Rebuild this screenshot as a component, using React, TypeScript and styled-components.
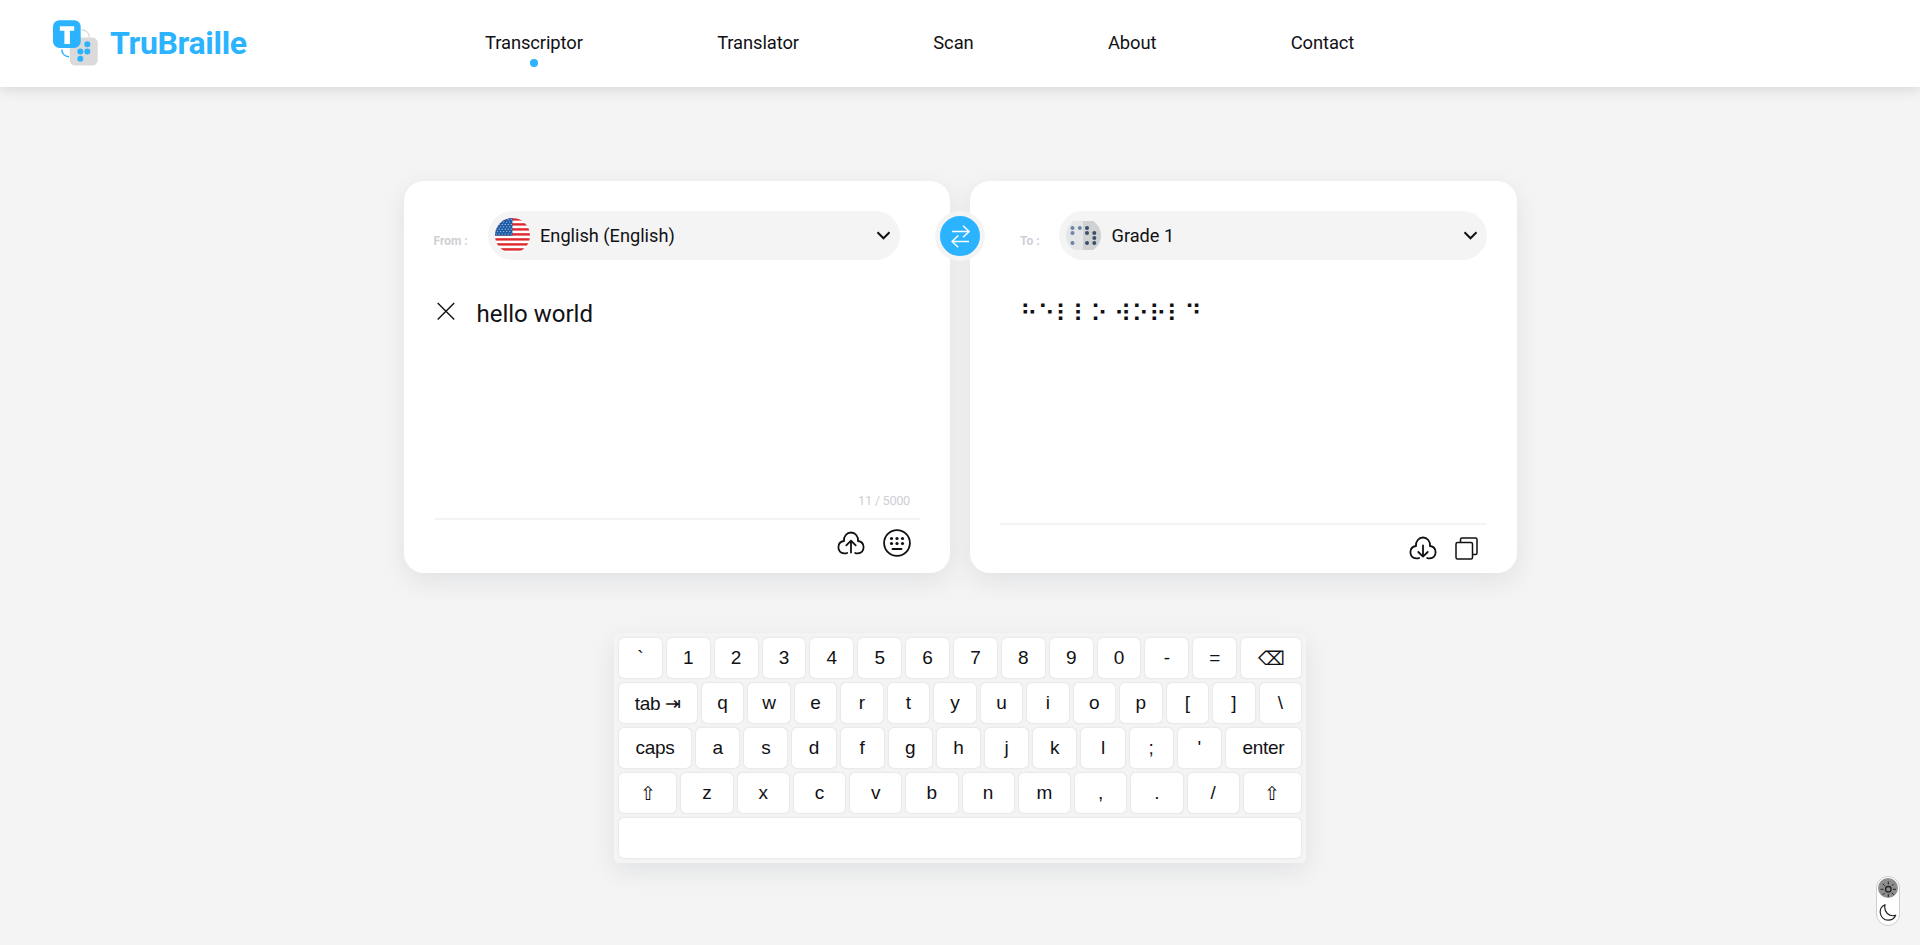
import React from 'react';
import styled, { createGlobalStyle } from 'styled-components';

const GlobalStyle = createGlobalStyle`
  *, *::before, *::after { box-sizing: border-box; }
  body { margin: 0; background: #f4f4f4; color: #111115; font-family: Roboto, sans-serif; }
  button { font: inherit; color: inherit; border: 0; background: none; padding: 0; }
  svg { display: block; flex: none; }
`;

const Page = styled.div`
  height: 945px;
  overflow: hidden;
  position: relative;
`;

const Header = styled.header`
  display: flex;
  align-items: center;
  height: 87px;
  padding: 0 0 2px 52px;
  background: #fff;
  box-shadow: 0 4px 12px rgba(0, 0, 0, 0.1);
`;

const Brand = styled.a`
  display: flex;
  align-items: center;
  gap: 12px;
  width: 433px;
  font-size: 32px;
  line-height: 36px;
  font-weight: 700;
  letter-spacing: -0.3px;
  color: #2bb3ff;
`;

const Nav = styled.nav`
  display: flex;
  gap: 134.3px;
`;

const NavLink = styled.a`
  position: relative;
  font-size: 18.4px;
  line-height: 24px;
  letter-spacing: -0.1px;
`;

const ActiveDot = styled.span`
  position: absolute;
  left: 50%;
  top: 28px;
  width: 8px;
  height: 8px;
  margin-left: -4px;
  border-radius: 50%;
  background: #2bb3ff;
`;

const Panels = styled.main`
  position: relative;
  display: flex;
  gap: 20px;
  width: 1113px;
  margin: 94px 0 0 404px;
`;

const Panel = styled.section<{ $pad: string }>`
  display: flex;
  flex-direction: column;
  flex: 1;
  height: 392px;
  padding: ${(p) => p.$pad};
  border-radius: 20px;
  background: #fff;
  box-shadow: rgba(149, 157, 165, 0.2) 0 8px 24px;
`;

const PickerRow = styled.div<{ $indent: number }>`
  display: flex;
  align-items: center;
  height: 49px;
  padding-left: ${(p) => p.$indent}px;
`;

const PickerLabel = styled.label<{ $width: number }>`
  width: ${(p) => p.$width}px;
  padding-top: 10px;
  font-size: 12px;
  line-height: 14px;
  font-weight: 700;
  color: #cfcfd4;
`;

const Picker = styled.button<{ $width: number }>`
  display: flex;
  align-items: center;
  gap: 10.5px;
  width: ${(p) => p.$width}px;
  height: 49px;
  padding: 0 9px 0 7px;
  border-radius: 25px;
  background: #f4f4f4;
  font-size: 18.2px;
`;

const PickerText = styled.span`
  flex: 1;
  text-align: left;
`;

const SwapButton = styled.button`
  position: absolute;
  left: 531px;
  top: 30px;
  width: 50px;
  height: 50px;
  border: 5px solid #f4f4f4;
  border-radius: 50%;
  background: #2bb3ff;
`;

const TextArea = styled.div<{ $indent: number }>`
  display: flex;
  flex: 1;
  gap: 22px;
  padding: 40px 0 0 ${(p) => p.$indent}px;
  font-size: 24px;
  line-height: 28px;
`;

const ClearButton = styled.button`
  align-self: flex-start;
  padding-top: 2px;
`;

const Braille = styled.span`
  font-family: Roboto, 'DejaVu Sans', sans-serif;
`;

const Counter = styled.div`
  padding: 0 10px 10px 0;
  text-align: right;
  font-size: 12.8px;
  line-height: 15px;
  letter-spacing: -0.32px;
  color: #cfcfd4;
`;

const Tools = styled.div<{ $height: number; $bottom: number }>`
  display: flex;
  justify-content: flex-end;
  align-items: center;
  gap: 18px;
  height: ${(p) => p.$height}px;
  margin-left: 1px;
  padding: 0 9px ${(p) => p.$bottom}px 0;
  border-top: 2px solid #f4f4f4;
`;

const Keyboard = styled.div`
  display: flex;
  flex-direction: column;
  gap: 5px;
  width: 692px;
  margin: 60px 0 0 614px;
  padding: 5px;
  border-radius: 5px;
  background: #f4f4f4;
  box-shadow: rgba(149, 157, 165, 0.2) 0 8px 24px;
`;

const KeyRow = styled.div`
  display: flex;
  gap: 5px;
`;

const Key = styled.button<{ $wide: boolean; $word: boolean }>`
  display: flex;
  flex: 1 0 ${(p) => (p.$wide ? 'auto' : '20px')};
  align-items: center;
  justify-content: center;
  height: 40px;
  padding: 5px;
  border-radius: 5px;
  background: #fff;
  box-shadow: 0 0 3px -1px rgba(0, 0, 0, 0.3);
  font-family: 'Liberation Sans', Arial, sans-serif;
  font-size: 19px;
  letter-spacing: ${(p) => (p.$word ? '-0.28px' : 'normal')};
  white-space: pre;
`;

const ThemeSwitch = styled.div`
  position: absolute;
  right: 20px;
  bottom: 19px;
  display: flex;
  flex-direction: column;
  justify-content: space-between;
  align-items: center;
  width: 24px;
  height: 50px;
  padding: 1px 0 3px;
  border: 1px solid #cdcdd2;
  border-radius: 12px;
  background: #fff;
`;

const ROWS = [
  ['`', '1', '2', '3', '4', '5', '6', '7', '8', '9', '0', '-', '=', '⌫'],
  ['tab ⇥', 'q', 'w', 'e', 'r', 't', 'y', 'u', 'i', 'o', 'p', '[', ']', '\\'],
  ['caps', 'a', 's', 'd', 'f', 'g', 'h', 'j', 'k', 'l', ';', "'", 'enter'],
  ['⇧', 'z', 'x', 'c', 'v', 'b', 'n', 'm', ',', '.', '/', '⇧'],
  [' '],
];

const isWide = (key: string) => key.length > 1 || key === '⌫' || key === '⇧';

const Logo = () => (
  <svg width="46" height="46" viewBox="0 0 46 46">
    <rect x="17.7" y="17.5" width="28" height="28" rx="5.5" fill="#dadada" />
    <path d="M29.7 10C34 10 37 13 37.3 17" fill="none" stroke="#dadada" strokeWidth="1.4" />
    <path d="M9.7 29.5C10 33.5 13 36.4 17 36.8" fill="none" stroke="#2bb3ff" strokeWidth="1.5" />
    <rect x="1" y="0.2" width="27.700" height="27.700" rx="6.500" fill="#2bb3ff" />
    <path d="M7.800 6.200H22.200V10.800H17.900V24H12.400V10.800H7.800Z" fill="#fff" />
    <g fill="#2bb3ff">
      <circle cx="35.300" cy="24.200" r="3" />
      <circle cx="28.300" cy="31.500" r="3" />
      <circle cx="35.300" cy="31.500" r="3" />
      <circle cx="28.300" cy="38.800" r="3" />
    </g>
  </svg>
);

const Flag = () => (
  <svg width="35" height="35" viewBox="0 0 35 35">
    <clipPath id="flagClip"><circle cx="17.5" cy="17.5" r="17.5" /></clipPath>
    <g clipPath="url(#flagClip)">
      <rect width="35" height="35" fill="#fff" />
      {[0, 1, 2, 3, 4, 5, 6].map((i) => (
        <rect key={i} x="0" y={0.2 + i * 5} width="35" height="2.4" fill="#dc2a2f" />
      ))}
      <rect width="17.500" height="17.700" fill="#1d5aa6" />
      {[0, 1, 2, 3, 4, 5, 6].map((r) =>
        [0, 1, 2, 3, 4, 5].map((c) => (
          <circle key={`${r}-${c}`} cx={1.2 + c * 3 + (r % 2) * 1.5} cy={1.6 + r * 2.4} r="0.6" fill="#c3d8ee" />
        )),
      )}
    </g>
  </svg>
);

const LIGHT_DOTS = [[6.5, 10], [13.8, 10], [6.5, 15], [6.5, 25]];
const DARK_DOTS = [[21, 10], [21, 15], [28.3, 15], [28.3, 20], [21, 25], [28.3, 25]];

const BrailleBadge = () => (
  <svg width="35" height="35" viewBox="0 0 35 35">
    <clipPath id="brailleClip"><circle cx="17.5" cy="17.5" r="17.5" /></clipPath>
    <g clipPath="url(#brailleClip)">
      <rect y="3" width="17" height="29" fill="#e4e6e8" />
      <rect x="17" y="3" width="18" height="29" fill="#cfd1d3" />
      {LIGHT_DOTS.map(([x, y]) => <circle key={`${x}-${y}`} cx={x} cy={y} r="2" fill="#6b84a8" />)}
      {DARK_DOTS.map(([x, y]) => <circle key={`${x}-${y}`} cx={x} cy={y} r="2" fill="#3c4f69" />)}
    </g>
  </svg>
);

const Chevron = () => (
  <svg width="15" height="10" viewBox="0 0 15 10" fill="none" stroke="#111115" strokeWidth="2">
    <path d="M1.500 1.300L7.500 7.300L13.500 1.300" />
  </svg>
);

const Swap = () => (
  <svg width="40" height="40" viewBox="0 0 40 40" fill="none" stroke="#fff" strokeWidth="1.500" strokeLinejoin="round">
    <path d="M12 15.500H29M23 9.700L29.200 15.500L23 21.300M29 25.500H12M18.300 19.500L12 25.500L18.300 31.300" />
  </svg>
);

const Close = () => (
  <svg width="18" height="18" viewBox="0 0 18 18" fill="none" stroke="#111115" strokeWidth="1.400">
    <path d="M0.700 0.900L17.200 17.500M17.200 0.900L0.700 17.500" />
  </svg>
);

const Cloud = ({ down = false }: { down?: boolean }) => (
  <svg width="28" height="24" viewBox="0 0 28 24" fill="none" stroke="#111115" strokeWidth="1.800" strokeLinecap="round" strokeLinejoin="round">
    <path d="M10.200 22C9.200 22.400 8.200 22.500 7.200 22.400C3.700 22.200 1.400 19.600 1.400 16.300C1.400 13 3.800 10.500 7 10C6.600 5.200 9.700 1.500 14 1.500C18.300 1.500 21.400 5.200 21 10C24.200 10.500 26.600 13 26.600 16.300C26.600 19.600 24.300 22.200 20.800 22.400C19.800 22.500 19 22.400 18.200 22" />
    {down ? <path d="M14 9.300V20.500M9.300 16L14 20.600L18.700 16" /> : <path d="M14 21.500V9.800M9.300 14.300L14 9.600L18.700 14.300" />}
  </svg>
);

const KeyboardIcon = () => (
  <svg width="28" height="28" viewBox="0 0 28 28">
    <circle cx="14" cy="14" r="12.900" fill="none" stroke="#111115" strokeWidth="1.800" />
    {[8.5, 14, 19.5].map((x) => [9.5, 14.5].map((y) => <circle key={`${x}-${y}`} cx={x} cy={y} r="1.600" fill="#111115" />))}
    <path d="M9.500 20H18.500" stroke="#111115" strokeWidth="1.800" strokeLinecap="round" />
  </svg>
);

const Copy = () => (
  <svg width="23" height="23" viewBox="0 0 23 23" fill="none" stroke="#111115" strokeWidth="1.500">
    <rect x="1" y="5.500" width="16.500" height="16.500" rx="1.500" />
    <path d="M5.500 5.500V2.500Q5.500 1 7 1H20.500Q22 1 22 2.500V16Q22 17.500 20.500 17.500H17.500" />
  </svg>
);

const Sun = () => (
  <svg width="20" height="20" viewBox="0 0 20 20" fill="none" stroke="#222" strokeWidth="1">
    <circle cx="10" cy="10" r="10" fill="#8e8e8e" stroke="none" />
    <circle cx="10.300" cy="11.300" r="2.800" strokeWidth="1.300" />
    <path d="M10.300 3.500V6.500M10.300 16V19M2.500 11.300H5.500M15 11.300H18M4.800 5.800L6.800 7.800M15.800 5.800L13.800 7.800M4.800 16.800L6.800 14.800M15.800 16.800L13.800 14.800" />
  </svg>
);

const Moon = () => (
  <svg width="18" height="18" viewBox="0 0 18 18" fill="none" stroke="#222" strokeWidth="1.200" strokeLinejoin="round">
    <path d="M6 0.700C2.500 2.300 0.800 5.500 1.300 9C1.900 13 5 16.200 9 16.200C12.500 16.200 15.500 14.300 16.700 11.300C13.500 12.200 10.500 11.800 8.300 9.500C5.900 7 5.300 4 6 0.700Z" />
  </svg>
);

export default function App() {
  return (
    <Page>
      <GlobalStyle />
      <Header>
        <Brand><Logo />TruBraille</Brand>
        <Nav>
          {['Transcriptor', 'Translator', 'Scan', 'About', 'Contact'].map((name, i) => (
            <NavLink key={name}>{name}{i === 0 && <ActiveDot />}</NavLink>
          ))}
        </Nav>
      </Header>
      <Panels>
        <Panel $pad="30px 30px 0 29.500px">
          <PickerRow $indent={0}>
            <PickerLabel $width={54}>From :</PickerLabel>
            <Picker $width={412}><Flag /><PickerText>English (English)</PickerText><Chevron /></Picker>
          </PickerRow>
          <TextArea $indent={3}>
            <ClearButton aria-label="Clear"><Close /></ClearButton>
            <span>hello world</span>
          </TextArea>
          <Counter>11 / 5000</Counter>
          <Tools $height={55} $bottom={7}><Cloud /><KeyboardIcon /></Tools>
        </Panel>
        <Panel $pad="30px 30px 0 29px">
          <PickerRow $indent={21}>
            <PickerLabel $width={39}>To :</PickerLabel>
            <Picker $width={428}><BrailleBadge /><PickerText>Grade 1</PickerText><Chevron /></Picker>
          </PickerRow>
          <TextArea $indent={21}><Braille>⠓⠑⠇⠇⠕ ⠺⠕⠗⠇⠙</Braille></TextArea>
          <Tools $height={50} $bottom={2}><Cloud down /><Copy /></Tools>
        </Panel>
        <SwapButton aria-label="Swap"><Swap /></SwapButton>
      </Panels>
      <Keyboard>
        {ROWS.map((row, r) => (
          <KeyRow key={r}>
            {row.map((key, i) => (
              <Key key={i} $wide={isWide(key)} $word={key.length > 1}>{key}</Key>
            ))}
          </KeyRow>
        ))}
      </Keyboard>
      <ThemeSwitch><Sun /><Moon /></ThemeSwitch>
    </Page>
  );
}
